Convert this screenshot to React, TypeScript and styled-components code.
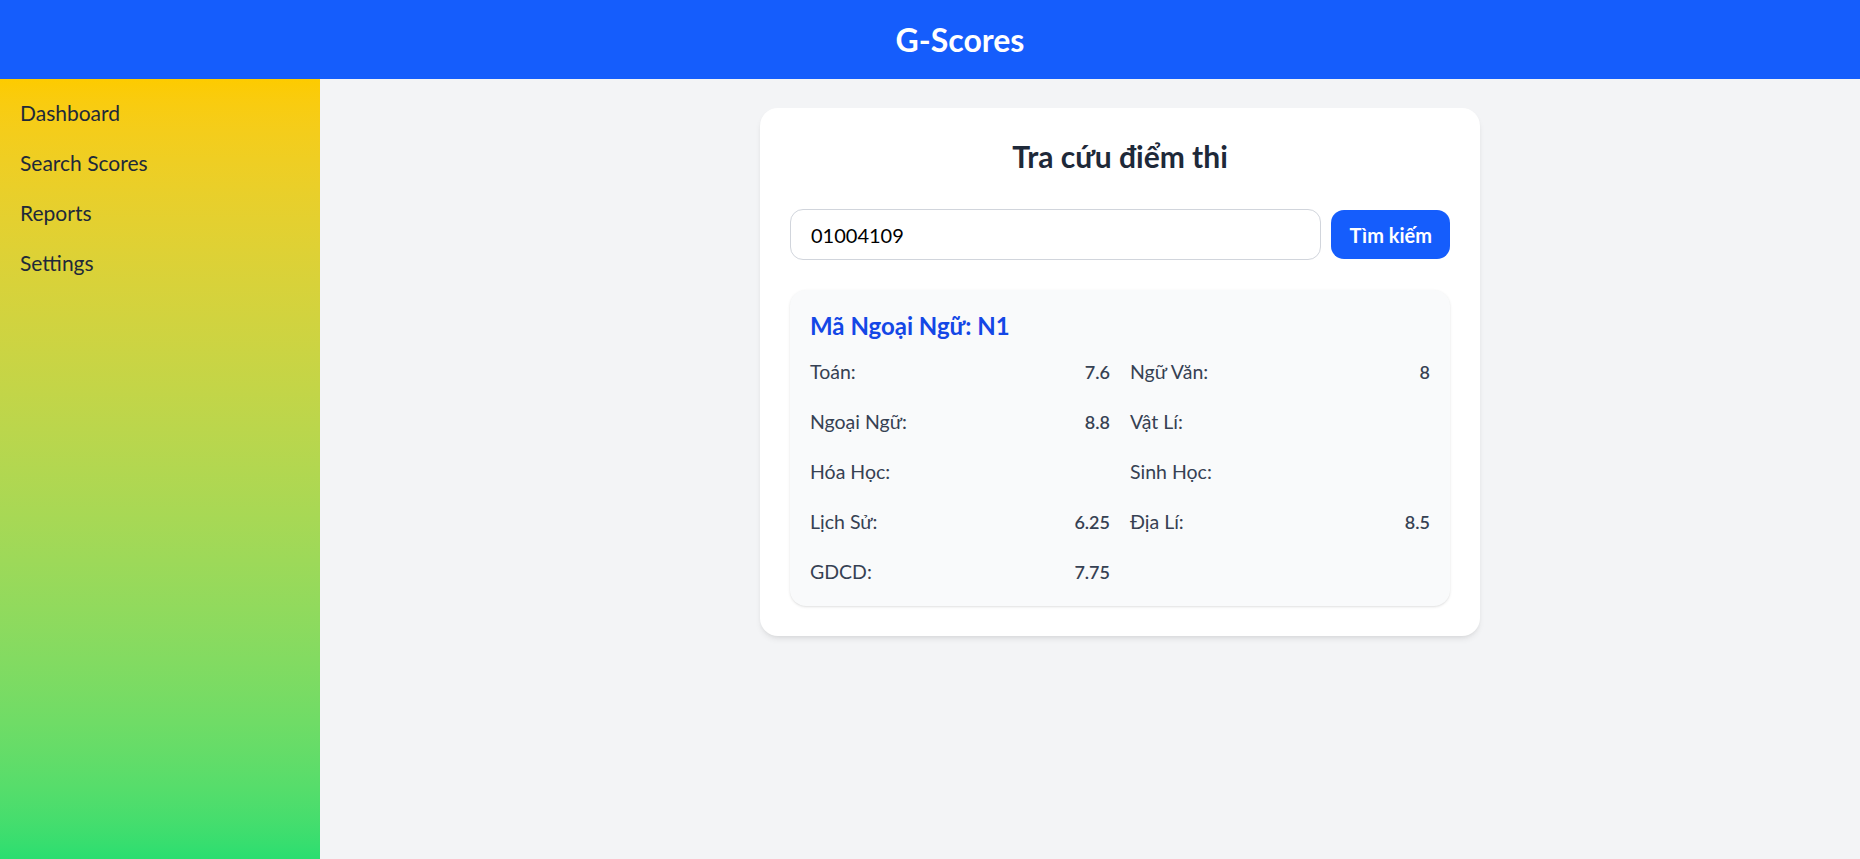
import React from "react";
import styled, { createGlobalStyle } from "styled-components";

const GlobalStyle = createGlobalStyle`
    * {
        box-sizing: border-box;
    }
    body {
        margin: 0;
        overflow: hidden;
        background: #f3f4f6;
        font-family: "Lato", "Noto Sans", sans-serif;
    }
`;

type Score = { label: string; value: string };

const scores: Score[] = [
    { label: "Toán:", value: "7.6" },
    { label: "Ngữ Văn:", value: "8" },
    { label: "Ngoại Ngữ:", value: "8.8" },
    { label: "Vật Lí:", value: "" },
    { label: "Hóa Học:", value: "" },
    { label: "Sinh Học:", value: "" },
    { label: "Lịch Sử:", value: "6.25" },
    { label: "Địa Lí:", value: "8.5" },
    { label: "GDCD:", value: "7.75" },
];

const menu = ["Dashboard", "Search Scores", "Reports", "Settings"];

export default function App() {
    return (
        <Page>
            <GlobalStyle />
            <Header>
                <Brand>G-Scores</Brand>
            </Header>
            <Body>
                <Sidebar>
                    <Menu>
                        {menu.map((item) => (
                            <MenuItem key={item}>{item}</MenuItem>
                        ))}
                    </Menu>
                </Sidebar>
                <Main>
                    <Card>
                        <Title>Tra cứu điểm thi</Title>
                        <SearchRow>
                            <SearchInput defaultValue="01004109" />
                            <SearchButton>Tìm kiếm</SearchButton>
                        </SearchRow>
                        <Result>
                            <ResultTitle>Mã Ngoại Ngữ: N1</ResultTitle>
                            <ScoreGrid>
                                {scores.map((s) => (
                                    <ScoreCell key={s.label}>
                                        <ScoreLabel>{s.label}</ScoreLabel>
                                        <ScoreValue>{s.value}</ScoreValue>
                                    </ScoreCell>
                                ))}
                            </ScoreGrid>
                        </Result>
                    </Card>
                </Main>
            </Body>
        </Page>
    );
}

const Page = styled.div`
    width: 1920px;
`;

const Header = styled.header`
    height: 79px;
    background: #155dfc;
    display: flex;
    align-items: center;
    justify-content: center;
`;

const Brand = styled.h1`
    margin: 0;
    color: #ffffff;
    font-size: 32px;
    font-weight: 700;
    line-height: 36px;
`;

const Body = styled.div`
    display: flex;
`;

const Sidebar = styled.aside`
    width: 320px;
    height: 780px;
    flex-shrink: 0;
    padding: 11px 20px;
    background: linear-gradient(in oklab to bottom, #fdcb00, #2ade70);
`;

const Menu = styled.ul`
    list-style: none;
    margin: 0;
    padding: 0;
    display: flex;
    flex-direction: column;
    gap: 6px;
`;

const MenuItem = styled.li`
    height: 44px;
    display: flex;
    align-items: center;
    font-size: 21px;
    color: #1e2939;
`;

const Main = styled.main`
    flex: 1;
    padding-top: 29px;
    display: flex;
    justify-content: center;
    align-items: flex-start;
`;

const Card = styled.section`
    width: 720px;
    padding: 30px;
    background: #ffffff;
    border-radius: 18px;
    box-shadow: 0 4px 6px -1px rgba(0, 0, 0, 0.08), 0 2px 4px -2px rgba(0, 0, 0, 0.08);
`;

const Title = styled.h2`
    margin: 0 0 35px;
    text-align: center;
    font-size: 30px;
    line-height: 36px;
    font-weight: 700;
    color: #1e2939;
`;

const SearchRow = styled.div`
    display: flex;
    align-items: center;
    gap: 10px;
`;

const SearchInput = styled.input`
    flex: 1;
    height: 51px;
    padding: 0 20px;
    border: 1px solid #d1d5dc;
    border-radius: 13px;
    font-family: inherit;
    font-size: 20px;
    color: #000000;
    outline: none;
`;

const SearchButton = styled.button`
    height: 49px;
    padding: 0 18px;
    border: none;
    border-radius: 13px;
    background: #155dfc;
    color: #ffffff;
    font-family: inherit;
    font-size: 20px;
    font-weight: 700;
`;

const Result = styled.div`
    margin-top: 30px;
    padding: 20px;
    background: #f9fafb;
    border-radius: 16px;
    box-shadow: 0 1px 3px 0 rgba(0, 0, 0, 0.1), 0 1px 2px -1px rgba(0, 0, 0, 0.1);
`;

const ResultTitle = styled.h3`
    margin: 0 0 16px;
    font-size: 24px;
    line-height: 32px;
    font-weight: 700;
    color: #1447e6;
`;

const ScoreGrid = styled.div`
    display: grid;
    grid-template-columns: 1fr 1fr;
    column-gap: 20px;
    row-gap: 22px;
`;

const ScoreCell = styled.div`
    display: flex;
    justify-content: space-between;
    font-size: 19.5px;
    line-height: 28px;
`;

const ScoreLabel = styled.span`
    color: #364153;
`;

const ScoreValue = styled.span`
    font-weight: 600;
    font-size: 18px;
    color: #364153;
`;
